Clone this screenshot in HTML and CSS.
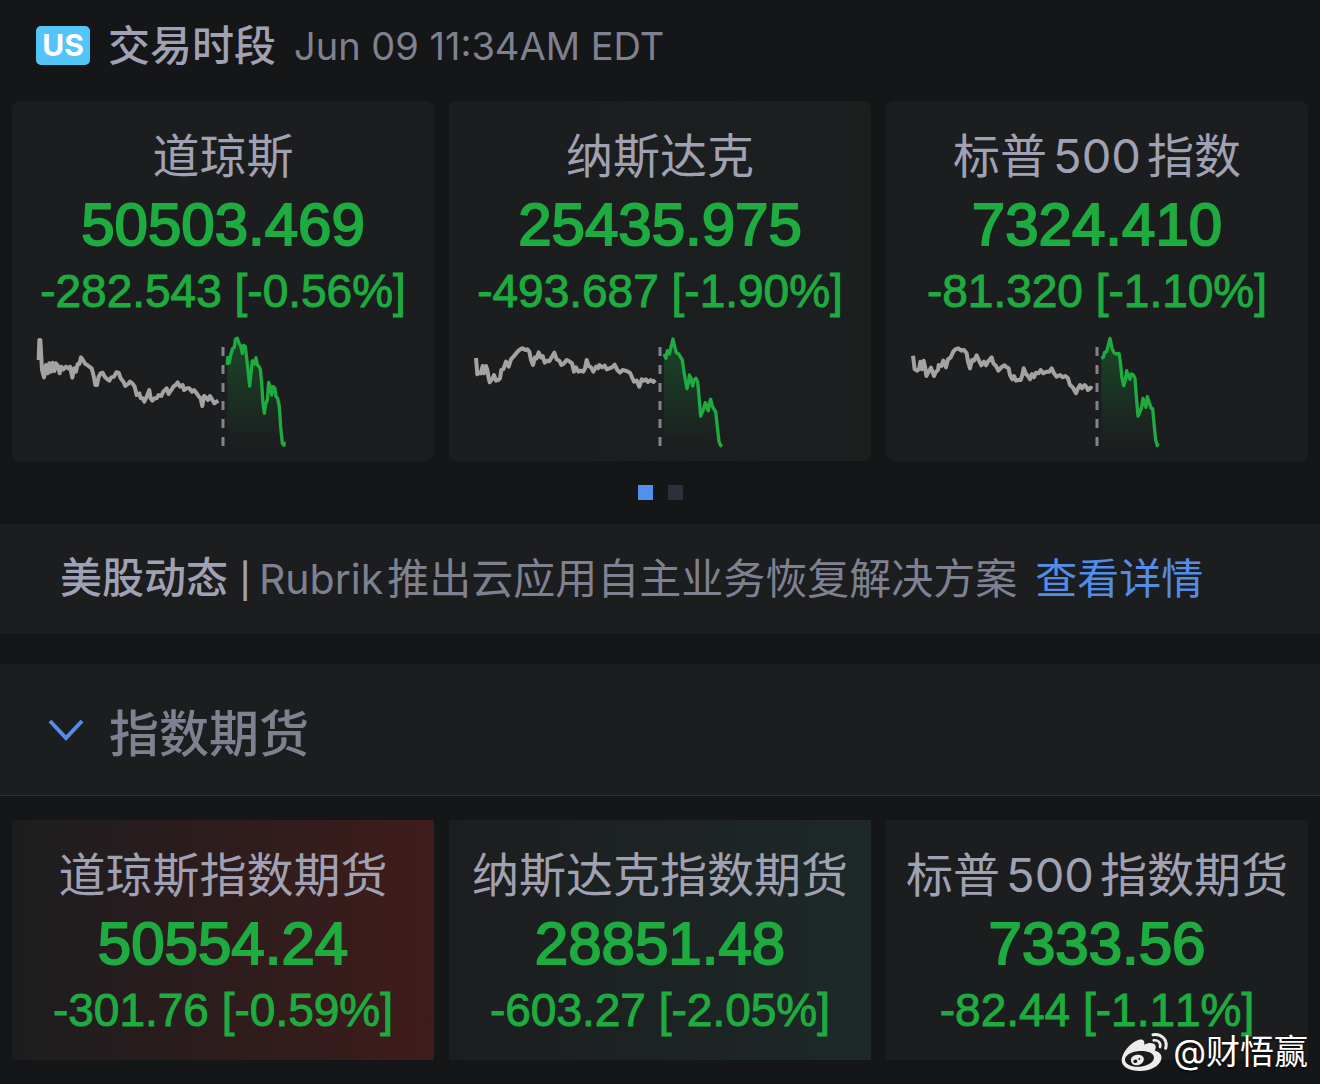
FILE: index.html
```html
<!DOCTYPE html>
<html lang="zh-CN">
<head>
    <meta charset="UTF-8">
    <meta name="viewport" content="width=device-width, initial-scale=1.0">
    <title>美股行情</title>
    <link rel="stylesheet" href="styles.css">
</head>
<body>
    <header class="session">
        <span class="market-badge">US</span>
        <span class="session-name">交易时段</span>
        <time class="session-time">Jun 09 11:34AM EDT</time>
    </header>

    <!-- Indices -->
    <section class="card-row">
        <article class="card index-card">
            <h3 class="card-title">道琼斯</h3>
            <div class="price">50503.469</div>
            <div class="change">-282.543 [-0.56%]</div>
            <svg class="chart" viewBox="36 243 1266 390" aria-hidden="true">
                <defs>
                    <linearGradient id="fade" x1="0" y1="0" x2="0" y2="1">
                        <stop offset="0" stop-color="#13a83c" stop-opacity="0.3"/>
                        <stop offset="1" stop-color="#13a83c" stop-opacity="0"/>
                    </linearGradient>
                </defs>
                <polyline class="line-prev" points="116,360 118,300 121,300 126,390 132,412 138,375 143,400 148,370 153,395 158,368 163,393 168,370 174,378 179,400 184,380 190,388 198,380 204,385 210,380 217,413 222,385 228,395 233,372 238,372 243,352 250,362 256,372 262,375 268,380 275,385 281,408 286,435 291,435 296,410 302,400 308,398 314,410 322,418 328,422 334,412 342,410 349,397 356,398 362,415 370,425 376,438 384,432 390,425 397,430 404,440 410,465 418,460 422,475 428,475 433,485 440,470 448,450 452,475 457,482 463,475 470,475 476,465 484,468 490,455 500,445 506,462 514,450 520,440 527,435 533,427 540,440 548,435 552,450 560,445 568,445 576,455 582,450 590,460 597,470 602,475 607,498 612,468 618,472 624,480 630,468 636,478 643,490 650,485 655,482"/>
                <line class="divider" x1="669" y1="321" x2="669" y2="618"/>
                <polygon fill="url(#fade)" points="682,375 692,345 706,298 712,295 722,318 736,320 749,438 757,362 768,353 781,388 793,520 806,427 825,445 833,475 842,560 852,616 682,616"/>
                <polyline class="line-now" points="682,375 683,352 688,368 692,345 698,325 703,322 706,298 712,295 718,312 722,318 727,340 731,316 736,320 740,355 745,400 749,438 753,400 757,362 763,372 768,353 772,375 776,378 781,388 785,430 789,490 793,520 797,492 802,480 806,427 811,440 815,465 820,440 825,445 828,470 833,475 838,500 842,560 847,610 852,616 853,605"/>
            </svg>
        </article>

        <article class="card index-card tint-down-light">
            <h3 class="card-title">纳斯达克</h3>
            <div class="price">25435.975</div>
            <div class="change">-493.687 [-1.90%]</div>
            <svg class="chart" viewBox="27 3 1266 390" aria-hidden="true">
                <polyline class="line-prev" points="108,114 112,163 118,158 122,160 128,138 132,160 138,138 142,150 146,175 149,187 156,178 162,165 168,182 175,180 180,175 184,150 190,148 198,125 206,140 213,118 222,108 230,98 238,90 247,85 256,90 262,88 268,95 273,120 279,135 285,112 290,115 296,97 303,112 308,108 314,128 322,122 328,124 335,112 343,98 350,118 358,122 364,135 372,130 380,120 388,124 396,130 402,155 408,142 415,155 422,152 430,155 435,145 440,120 446,138 453,142 460,155 468,140 474,145 478,135 486,142 494,137 500,148 508,145 516,142 524,134 532,150 540,158 548,150 556,152 564,155 570,158 576,172 582,185 590,182 598,200 605,178 612,182 618,178 624,186 632,180 640,186 646,180"/>
                <line class="divider" x1="660" y1="81" x2="660" y2="378"/>
                <polygon fill="url(#fade)" points="672,102 682,92 692,85 699,57 709,98 722,112 731,150 741,206 748,165 758,198 773,185 782,288 796,248 805,272 812,238 827,275 837,365 842,377 672,377"/>
                <polyline class="line-now" points="672,102 678,115 682,92 688,102 692,85 699,57 704,80 709,98 716,102 722,112 727,120 731,150 736,180 741,206 745,190 748,165 753,175 758,198 762,180 768,175 773,185 777,230 782,288 788,275 792,262 796,248 801,265 805,272 808,250 812,238 817,258 822,268 827,275 832,320 837,365 842,377 845,372"/>
            </svg>
        </article>

        <article class="card index-card">
            <h3 class="card-title">标普<span class="num">500</span>指数</h3>
            <div class="price">7324.410</div>
            <div class="change">-81.320 [-1.10%]</div>
            <svg class="chart" viewBox="18 3 1266 390" aria-hidden="true">
                <polyline class="line-prev" points="99,107 104,148 112,152 118,145 121,125 126,148 131,122 136,145 139,168 146,155 153,143 162,168 168,155 174,150 176,135 184,138 190,122 198,142 204,118 212,112 220,95 226,88 235,85 244,92 252,90 260,100 264,125 270,145 276,120 282,122 290,106 297,122 304,136 312,125 318,136 324,125 335,112 340,130 348,138 355,152 364,142 374,136 380,142 386,145 390,165 397,178 402,168 408,182 416,180 422,180 427,165 431,145 438,162 444,168 450,178 456,162 462,172 468,158 476,160 482,150 490,160 500,155 508,155 515,145 522,160 530,170 540,165 548,172 556,168 564,175 570,195 578,202 588,220 594,205 600,195 606,205 614,195 620,202 624,210 632,203 637,206"/>
                <line class="divider" x1="651" y1="81" x2="651" y2="378"/>
                <polygon fill="url(#fade)" points="664,115 674,97 685,75 690,55 702,98 717,100 726,175 731,197 740,152 750,178 765,175 774,288 789,235 798,262 802,230 818,266 827,360 832,377 664,377"/>
                <polyline class="line-now" points="664,115 670,112 674,97 680,95 685,75 690,55 696,85 702,98 708,102 717,100 721,125 726,175 731,197 736,180 740,152 746,170 750,178 754,162 760,165 765,175 769,230 774,288 780,275 785,262 789,235 794,250 798,262 802,230 808,248 814,265 818,266 822,310 827,360 832,377 834,370"/>
            </svg>
        </article>
    </section>

    <nav class="pager">
        <button class="dot active" aria-label="第 1 页"></button>
        <button class="dot" aria-label="第 2 页"></button>
    </nav>

    <section class="news">
        <strong class="news-label">美股动态 <span class="news-bar">|</span></strong>
        <span class="news-source">Rubrik</span>
        <span class="news-text">推出云应用自主业务恢复解决方案</span>
        <a class="news-link" href="#">查看详情</a>
    </section>

    <!-- Index futures -->
    <button class="group-header" aria-expanded="true">
        <svg class="chevron" viewBox="0 0 36 24" aria-hidden="true">
            <path d="M2 3 L18 20 L34 3"/>
        </svg>
        指数期货
    </button>

    <section class="card-row futures">
        <article class="card tint-up">
            <h3 class="card-title">道琼斯指数期货</h3>
            <div class="price">50554.24</div>
            <div class="change">-301.76 [-0.59%]</div>
        </article>
        <article class="card tint-down">
            <h3 class="card-title">纳斯达克指数期货</h3>
            <div class="price">28851.48</div>
            <div class="change">-603.27 [-2.05%]</div>
        </article>
        <article class="card">
            <h3 class="card-title">标普<span class="num">500</span>指数期货</h3>
            <div class="price">7333.56</div>
            <div class="change">-82.44 [-1.11%]</div>
        </article>

        <div class="watermark">
            <svg class="weibo" viewBox="64 34 144 118" aria-hidden="true">
                <path fill="#ececec" fill-rule="evenodd" d="M66 118C66 96 92 63 118 56C131 53 137 61 133 71C146 65 162 64 167 73C170 79 167 84 166 89C179 92 188 101 185 114C180 137 150 150 121 150C91 150 66 139 66 118ZM76 117C78 132 98 139 121 137C146 135 164 122 163 108C161 95 142 88 118 90C94 92 75 104 76 117Z"/>
                <path fill="#ececec" fill-rule="evenodd" d="M94 119C92 108 104 100 117 101C130 102 136 111 131 121C127 130 115 135 105 132C98 130 95 125 94 119ZM101 122A6 5 0 1 0 113 120A6 5 0 1 0 101 122ZM116 114A3 3 0 1 0 122 114A3 3 0 1 0 116 114Z"/>
                <path class="wave" stroke-width="9" d="M160 41C185 36 205 57 198 82"/>
                <path class="wave" stroke-width="8" d="M162 58C175 56 185 66 181 78"/>
            </svg>
            @财悟赢
        </div>
    </section>
</body>
</html>
```

FILE: styles.css
```css
* {
    box-sizing: border-box;
}

body {
    margin: 0;
    background: #151618;
    color: #a0a1b2;
    font-family: Inter, "Noto Sans CJK SC", sans-serif;
}

/* Session bar */
.session {
    display: flex;
    align-items: center;
    height: 101px;
    padding: 0 36px 10px;
    font-size: 42px;
    line-height: 60px;
}

.market-badge {
    width: 54px;
    margin-right: 18px;
    border-radius: 5px;
    background: #54c5f8;
    color: #fff;
    font-size: 30px;
    font-weight: 700;
    line-height: 39px;
    text-align: center;
}

.session-name {
    margin-right: 18px;
    font-weight: 500;
}

.session-time {
    color: #7f8190;
    font-size: 38px;
}

/* Cards */
.card-row {
    display: grid;
    grid-template-columns: repeat(3, 1fr);
    gap: 15px;
    padding: 0 12px;
}

.card {
    padding: 22px 0 20px;
    background: #1c1d1f;
    text-align: center;
    white-space: nowrap;
}

.index-card {
    padding-bottom: 10px;
    border-radius: 8px;
}

.tint-down-light {
    background: linear-gradient(to right, #1c1d1f 30%, #1b201f);
}

.tint-down {
    background: linear-gradient(to right, #1c1d1f, #1e2927);
}

.tint-up {
    background: linear-gradient(to right, #1c1d1f, #3f1c1b);
}

.card-title {
    margin: 0;
    font-size: 47px;
    font-weight: 400;
    line-height: 66px;
}

.num {
    padding: 0 6px;
}

.price,
.change {
    color: #1eab3f;
    font-family: "Liberation Sans", Arial, sans-serif;
    font-kerning: none;
}

.price {
    font-size: 60px;
    line-height: 72px;
    -webkit-text-stroke: 2px #1eab3f;
}

.change {
    font-size: 46px;
    line-height: 60px;
    -webkit-text-stroke: 1px #1eab3f;
}

/* Sparklines */
.chart {
    display: block;
    width: 100%;
}

.chart polyline {
    fill: none;
    stroke-linejoin: round;
}

.chart .line-prev {
    stroke: #a3a3a3;
    stroke-width: 12;
}

.chart .line-now {
    stroke: #1eab3f;
    stroke-width: 10;
}

.divider {
    stroke: #81838f;
    stroke-width: 9;
    stroke-dasharray: 27;
}

/* Pager */
.pager {
    display: flex;
    justify-content: center;
    gap: 15px;
    padding: 24px 0;
}

.dot {
    width: 15px;
    height: 15px;
    padding: 0;
    border: none;
    background: #2d303a;
    cursor: pointer;
}

.dot.active {
    background: #5290f0;
}

/* News strip */
.news {
    display: flex;
    align-items: center;
    height: 110px;
    margin-bottom: 30px;
    padding: 0 60px;
    background: #1c1d1f;
    font-size: 42px;
    line-height: 60px;
    white-space: nowrap;
}

.news-label {
    margin-right: 8px;
    font-weight: 500;
}

.news-bar {
    font-size: 34px;
}

.news-source {
    margin-right: 4px;
    color: #7f8190;
    font-size: 41px;
}

.news-text {
    margin-right: 18px;
    color: #7f8190;
}

.news-link {
    color: #538de8;
    text-decoration: none;
}

/* Group header */
.group-header {
    display: flex;
    align-items: center;
    gap: 25px;
    width: 100%;
    height: 132px;
    padding: 0 48px;
    border: none;
    border-bottom: 1px solid #303136;
    background: #1c1d1f;
    color: #7f8190;
    font-family: inherit;
    font-size: 50px;
    font-weight: 500;
    cursor: pointer;
}

.chevron {
    width: 36px;
    height: 24px;
    fill: none;
    stroke: #538de8;
    stroke-width: 4;
}

.futures {
    position: relative;
    padding-top: 24px;
    padding-bottom: 24px;
}

.watermark {
    position: absolute;
    right: 12px;
    bottom: 7px;
    display: flex;
    align-items: center;
    gap: 4px;
    color: #fff;
    font-size: 34px;
    line-height: 50px;
    text-shadow: 0 1px 3px #000;
}

.weibo {
    width: 48px;
    height: 40px;
}

.wave {
    fill: none;
    stroke: #ececec;
    stroke-linecap: round;
}
```
